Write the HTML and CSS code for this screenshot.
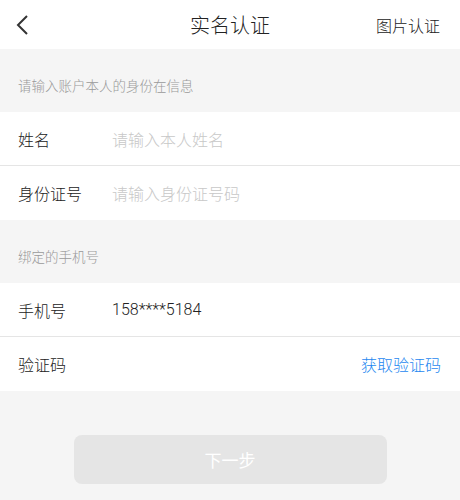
FILE: index.html
```html
<!DOCTYPE html>
<html lang="zh-CN">
<head>
    <meta charset="UTF-8">
    <meta name="viewport" content="width=device-width, initial-scale=1.0">
    <title>实名认证</title>
    <link rel="stylesheet" href="styles.css">
</head>
<body>

    <!-- 顶部导航 -->
    <div class="navbar">
        <span class="nav-back">
            <svg width="14" height="22" viewBox="0 0 14 22">
                <polyline points="11,2 2,11 11,20" fill="none" stroke="#333" stroke-width="2"/>
            </svg>
        </span>
        <span class="nav-title">实名认证</span>
        <span class="nav-right">图片认证</span>
    </div>

    <!-- 身份信息 -->
    <div class="section-title">请输入账户本人的身份在信息</div>
    <div class="group">
        <div class="cell">
            <span class="cell-label">姓名</span>
            <input class="cell-input" type="text" placeholder="请输入本人姓名">
        </div>
        <div class="cell">
            <span class="cell-label">身份证号</span>
            <input class="cell-input" type="text" placeholder="请输入身份证号码">
        </div>
    </div>

    <!-- 手机号 -->
    <div class="section-title">绑定的手机号</div>
    <div class="group">
        <div class="cell">
            <span class="cell-label">手机号</span>
            <span class="cell-value">158****5184</span>
        </div>
        <div class="cell">
            <span class="cell-label">验证码</span>
            <input class="cell-input" type="text">
            <span class="get-code">获取验证码</span>
        </div>
    </div>

    <div class="footer">
        <button class="next-btn" disabled>下一步</button>
    </div>

</body>
</html>
```

FILE: styles.css
```css
body {
    margin: 0;
    background-color: #f5f5f5;
    font-family: "Noto Sans CJK SC", "Noto Sans", sans-serif;
    font-weight: 300;
    color: #222;
}
.navbar {
    height: 49px;
    background-color: #fff;
    display: flex;
    align-items: center;
    justify-content: space-between;
    padding: 0 20px 0 16px;
    position: relative;
}
.nav-back {
    display: flex;
    align-items: center;
}
.nav-title {
    position: absolute;
    left: 0;
    right: 0;
    text-align: center;
    font-size: 20px;
    line-height: 49px;
    pointer-events: none;
}
.nav-right {
    font-size: 16px;
}
.section-title {
    height: 63px;
    line-height: 72px;
    padding-left: 18px;
    font-size: 13.5px;
    color: #999;
    box-sizing: border-box;
}
.group {
    background-color: #fff;
}
.cell {
    display: flex;
    align-items: center;
    height: 53px;
    padding: 0 19px 0 18px;
    font-size: 16px;
    border-top: 1px solid #e5e5e5;
}
.cell:first-child {
    border-top: none;
}
.cell:last-child {
    height: 54px;
}
.cell-label {
    width: 94px;
    flex-shrink: 0;
}
.cell-input {
    flex: 1;
    min-width: 0;
    border: none;
    outline: none;
    padding: 0;
    font-family: inherit;
    font-weight: 300;
    font-size: 16px;
    color: #222;
    background: transparent;
}
.cell-input::placeholder {
    color: #c8c8c8;
}
.cell-value {
    flex: 1;
    font-family: Roboto, "Noto Sans", sans-serif;
    font-weight: 300;
    font-size: 16px;
    color: #222;
}
.get-code {
    color: #1e88f0;
    font-size: 16px;
}
.footer {
    padding-top: 44px;
    display: flex;
    justify-content: center;
}
.next-btn {
    width: 313px;
    height: 49px;
    border: none;
    border-radius: 8px;
    background-color: #e5e5e5;
    color: #fff;
    font-family: inherit;
    font-weight: 400;
    font-size: 17px;
}
```
